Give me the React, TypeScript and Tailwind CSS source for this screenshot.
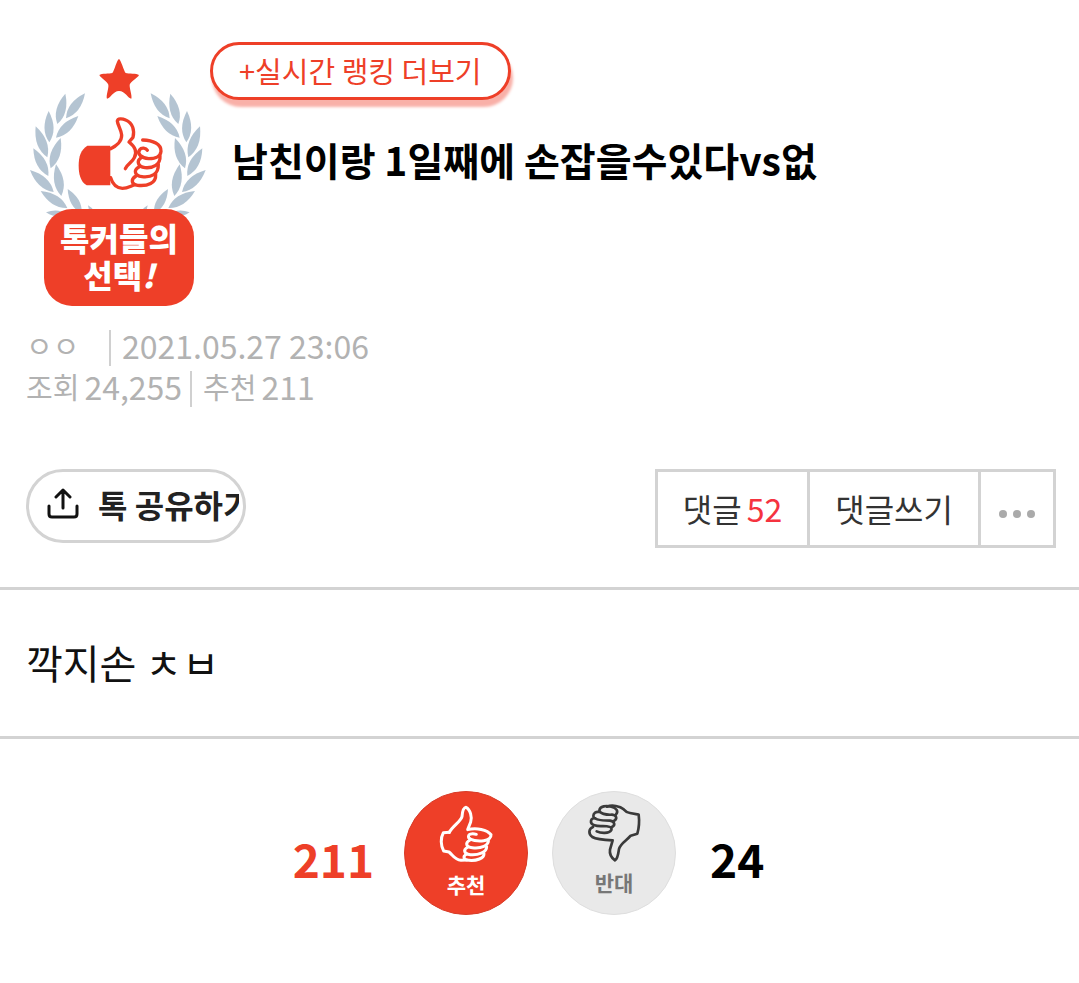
import { useState } from 'react';

type LeafProps = { tip: [number, number]; base: [number, number] };

const leaves: LeafProps[] = [
  { tip: [195, 130], base: [138, 205] },
  { tip: [136, 131], base: [112, 222] },
  { tip: [175, 198], base: [108, 263] },
  { tip: [86, 183], base: [88, 277] },
  { tip: [122, 264], base: [92, 355] },
  { tip: [47, 229], base: [82, 322] },
  { tip: [40, 295], base: [85, 378] },
  { tip: [108, 343], base: [124, 438] },
  { tip: [30, 360], base: [101, 426] },
  { tip: [62, 423], base: [142, 474] },
  { tip: [143, 417], base: [185, 490] },
  { tip: [78, 487], base: [140, 494] },
  { tip: [204, 466], base: [226, 500] },
];

const Leaf = ({ tip, base }: LeafProps) => {
  const dx = base[0] - tip[0];
  const dy = base[1] - tip[1];
  const mx = tip[0] + dx * 0.58;
  const my = tip[1] + dy * 0.58;
  const ox = -dy * 0.29;
  const oy = dx * 0.29;
  return (
    <path
      d={`M${tip[0]} ${tip[1]} Q${mx + ox} ${my + oy} ${base[0]} ${base[1]} Q${mx - ox} ${my - oy} ${tip[0]} ${tip[1]}Z`}
    />
  );
};

const Laurel = () => (
  <svg viewBox="18 0 552 504" className="block w-[184px] h-[168px]" aria-hidden="true">
    <g fill="#b4c4d2">
      {leaves.map((leaf, i) => (
        <Leaf key={i} {...leaf} />
      ))}
      <g transform="translate(587 0) scale(-1 1)">
        {leaves.map((leaf, i) => (
          <Leaf key={i} {...leaf} />
        ))}
      </g>
    </g>
    <path
      d="M297 27C303 30 311 61 317 69C326 72 350 69 357 75C353 84 332 95 329 104C328 115 337 137 334 146C324 146 316 123 297 123C279 123 271 146 261 146C257 137 267 115 265 104C262 95 242 84 238 75C245 69 268 72 277 69C284 61 290 30 297 27Z"
      fill="#ee3f28"
    />
    <path d="M202 287H271V406H200C181 395 176 370 176 347C176 320 182 300 202 287Z" fill="#ee3f28" />
    <g fill="none" stroke="#ee3f28" strokeWidth="10" strokeLinecap="round" strokeLinejoin="round">
      <path d="M272 296C289 288 306 273 305 255C304 240 293 226 292 213C293 205 306 205 317 210C339 219 344 242 339 262L327 276C345 290 352 307 343 323C337 337 321 343 316 356" />
      <path d="M272 383C278 404 290 414 307 415C323 415 332 408 342 405" />
      <path d="M368 270C399 271 424 282 423 304C421 321 405 326 386 326C364 325 350 311 359 299C364 292 378 293 382 301" />
      <path d="M364 323C348 333 354 351 375 353C399 355 422 344 420 318" />
      <path d="M358 350C338 361 345 378 366 380C394 383 416 373 415 343" />
      <path d="M348 378C331 388 334 404 353 406C383 409 409 399 407 373" />
    </g>
  </svg>
);

const ThumbUp = () => (
  <svg viewBox="132 72 168 180" className="w-[56px] h-[60px]" fill="none" stroke="#fff" strokeWidth="9" strokeLinecap="round" strokeLinejoin="round" aria-hidden="true">
    <path d="M166 157C177 137 200 125 204 110C205 97 208 83 216 82C229 88 235 113 230 126L221 149C247 142 280 149 291 164C292 173 284 181 269 182C251 184 229 181 224 173C220 162 234 159 247 163" />
    <path d="M166 157L148 158C139 174 140 197 149 213L165 216C177 226 182 239 201 241L218 240" />
    <path d="M228 180C212 189 216 201 235 203C260 206 286 198 283 178" />
    <path d="M222 201C205 210 211 222 229 224C251 226 278 218 278 200" />
    <path d="M219 222C204 229 209 240 225 241C248 243 270 235 270 221" />
  </svg>
);

const ThumbDown = () => (
  <svg viewBox="144 68 168 180" className="w-[56px] h-[60px]" fill="none" stroke="#3a3a3a" strokeWidth="8" strokeLinecap="round" strokeLinejoin="round" aria-hidden="true">
    <path d="M207 82C222 76 246 80 257 90C262 96 268 100 276 101L302 106C304 122 303 146 298 163L278 169C268 182 247 192 243 209C241 224 237 240 231 243C221 236 214 224 216 211L224 183C198 182 176 181 163 173C150 163 152 148 165 143" />
    <path d="M176 156C188 162 213 164 220 152C224 143 210 140 195 140C176 141 157 138 159 125C160 118 166 116 172 117" />
    <path d="M220 144C234 138 230 126 216 124C194 124 167 121 166 110C166 101 174 96 184 98" />
    <path d="M226 126C240 118 236 108 222 106C204 107 185 103 184 93C186 80 205 78 220 82C236 86 242 96 234 105" />
  </svg>
);

const ShareIcon = () => (
  <svg viewBox="0 0 32 32" className="w-[32px] h-[32px] shrink-0" fill="none" stroke="#111" strokeWidth="3" strokeLinecap="round" strokeLinejoin="round" aria-hidden="true">
    <path d="M16 20V2M9 9L16 2L23 9M2 18V26Q2 29 5 29H27Q30 29 30 26V18" />
  </svg>
);

const Divider = () => <span className="mt-[5px] h-[36px] w-[2px] bg-[#d0d0d0]" />;

const PostHeader = () => (
  <header className="px-[26px] pt-[42px]">
    <div className="flex items-start">
      <div className="mt-2 flex shrink-0 flex-col items-center">
        <Laurel />
        <div className="relative -mt-[9px] ml-[2px] h-[97px] w-[150px] rounded-[28px] bg-[#ee3f28] pt-[10px] text-center text-[32px] leading-[37px] font-black text-white">
          <p>톡커들의</p>
          <p>
            선택<i>!</i>
          </p>
        </div>
      </div>
      <div className="min-w-0 flex-1">
        <a
          href="#ranking"
          className="inline-flex h-[58px] items-center rounded-full border-[3px] border-[#ee3f28] bg-white px-[26px] text-[29px] text-[#ee3f28] shadow-[2px_7px_3px_#f9b0a8]"
        >
          +실시간 랭킹 더보기
        </a>
        <h1 className="mt-[29px] pl-[22px] text-[39px] leading-[60px] font-bold text-black">
          남친이랑 1일째에 손잡을수있다vs없
        </h1>
      </div>
    </div>

    <div className="mt-[19px] text-[32px] leading-[41px] text-[#b2b2b2]">
      <div className="flex items-center gap-[11px]">
        <span className="w-[72px] text-[29px]">ㅇㅇ</span>
        <Divider />
        <time dateTime="2021-05-27T23:06">2021.05.27 23:06</time>
      </div>
      <div className="flex items-center gap-[8px]">
        <span className="flex gap-[5px]">
          <span className="text-[29px]">조회</span>
          <span>24,255</span>
        </span>
        <Divider />
        <span className="flex gap-[5px] pl-[3px]">
          <span className="text-[29px]">추천</span>
          <span>211</span>
        </span>
      </div>
    </div>
  </header>
);

const Toolbar = () => (
  <div className="flex items-start justify-between pt-[62px] pr-[23px] pb-[39px] pl-[26px]">
    <button
      type="button"
      className="flex h-[74px] w-[220px] items-center rounded-full border-[3px] border-[#d3d3d3] pr-[4px] pb-[4px] pl-[18px] text-[#222]"
    >
      <ShareIcon />
      <span className="ml-[19px] min-w-0 flex-1 overflow-hidden text-left text-[32px] font-bold whitespace-nowrap">
        톡 공유하기
      </span>
    </button>
    <div className="flex h-[79px] divide-x-[3px] divide-[#d3d3d3] border-[3px] border-[#d3d3d3] text-[32px] text-[#333]">
      <a href="#comments" className="flex items-center px-[25px] pb-[2px]">
        댓글<span className="pl-[5px] text-[#f5333f]">52</span>
      </a>
      <a href="#write" className="flex items-center px-[25px] pb-[2px]">
        댓글쓰기
      </a>
      <button type="button" aria-label="더보기" className="flex w-[72px] items-center justify-center gap-[6px] pt-[10px]">
        <span className="size-[8px] rounded-full bg-[#aaa]" />
        <span className="size-[8px] rounded-full bg-[#aaa]" />
        <span className="size-[8px] rounded-full bg-[#aaa]" />
      </button>
    </div>
  </div>
);

const Votes = () => {
  const [vote, setVote] = useState<'up' | 'down' | null>(null);

  return (
    <div className="flex items-center justify-center pt-[52px] pr-[22px] pb-[64px] text-[46px] font-bold">
      <span className="pt-[10px] text-[#ee3f28]">211</span>
      <button
        type="button"
        aria-pressed={vote === 'up'}
        onClick={() => setVote('up')}
        className="ml-[30px] flex size-[124px] flex-col items-center rounded-full border border-[#d83c28] bg-[#ee3f28] pt-[12px] text-[21px] leading-[40px] text-white"
      >
        <ThumbUp />
        추천
      </button>
      <button
        type="button"
        aria-pressed={vote === 'down'}
        onClick={() => setVote('down')}
        className="ml-[24px] flex size-[124px] flex-col items-center rounded-full border border-[#dedede] bg-[#e9e9e9] pt-[10px] text-[21px] leading-[40px] text-[#777]"
      >
        <ThumbDown />
        반대
      </button>
      <span className="ml-[34px] pt-[10px] text-black">24</span>
    </div>
  );
};

export default function App() {
  return (
    <main className="min-h-screen bg-white font-['Noto_Sans_CJK_KR',sans-serif]">
      <PostHeader />
      <Toolbar />
      <article className="border-y-[3px] border-[#d3d3d3] px-[26px] pt-[42px] pb-[44px] text-[40px] leading-[60px] text-[#111]">
        깍지손 ㅊㅂ
      </article>
      <Votes />
    </main>
  );
}
